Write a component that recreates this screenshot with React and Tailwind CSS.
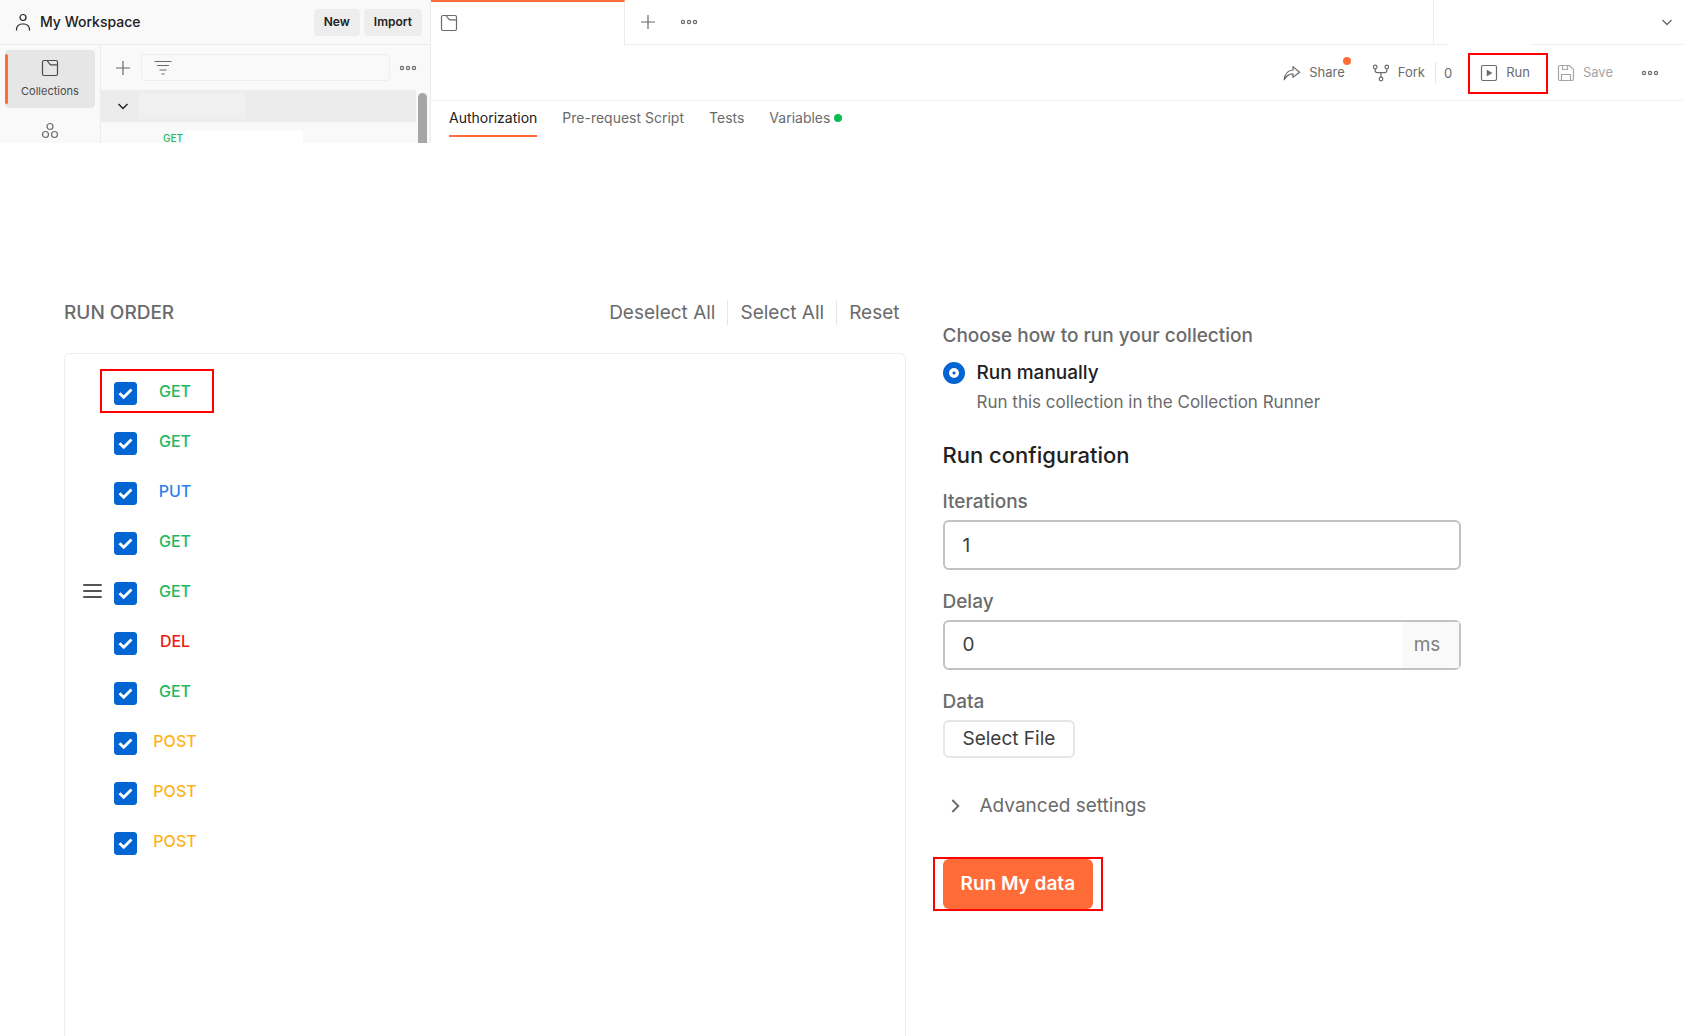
import { useState } from 'react';

const requests = [
  { id: 1, method: 'GET', marked: true },
  { id: 2, method: 'GET' },
  { id: 3, method: 'PUT' },
  { id: 4, method: 'GET' },
  { id: 5, method: 'GET', hovered: true },
  { id: 6, method: 'DEL' },
  { id: 7, method: 'GET' },
  { id: 8, method: 'POST' },
  { id: 9, method: 'POST' },
  { id: 10, method: 'POST' },
];

const methodColors = {
  GET: 'text-[#1fb85c]',
  PUT: 'text-[#2a7ff0]',
  DEL: 'text-[#eb2013]',
  POST: 'text-[#ffb31a]',
};

const tabs = ['Authorization', 'Pre-request Script', 'Tests', 'Variables'];

function Icon({ children, size = 18, className = '' }) {
  return (
    <svg width={size} height={size} viewBox="0 0 18 18" fill="none" stroke="currentColor" strokeWidth="1.2"
      className={`shrink-0 ${className}`} aria-hidden="true">
      {children}
    </svg>
  );
}

const UserIcon = () => (
  <Icon>
    <circle cx="9" cy="4.5" r="3" />
    <path d="M2.5 17.5v-1.2a5.3 5.3 0 0 1 5.3-5.3h2.4a5.3 5.3 0 0 1 5.3 5.3v1.2" />
  </Icon>
);

const CollectionIcon = () => (
  <Icon>
    <rect x="1.5" y="1.5" width="15" height="15" rx="1.5" />
    <path d="M6 1.5l2.8 3.7a1.5 1.5 0 0 0 1.2.6h6.5" />
  </Icon>
);

const ApiIcon = () => (
  <Icon>
    <circle cx="9" cy="4.5" r="3" />
    <circle cx="4.5" cy="12.5" r="3" />
    <circle cx="13.5" cy="12.5" r="3" />
  </Icon>
);

const PlusIcon = () => (
  <Icon>
    <path d="M9 2v14M2 9h14" />
  </Icon>
);

const FilterIcon = () => (
  <Icon>
    <path d="M.5 2.5h17M3 6.5h12M5.5 11h7M7.5 15h3" />
  </Icon>
);

const DotsIcon = () => (
  <Icon>
    <circle cx="3" cy="9" r="1.6" />
    <circle cx="9" cy="9" r="1.6" />
    <circle cx="15" cy="9" r="1.6" />
  </Icon>
);

const ChevronIcon = ({ size, className }) => (
  <Icon size={size} className={className}>
    <path d="M4.5 7L9 11.5 13.5 7" strokeWidth="1.4" />
  </Icon>
);

const ShareIcon = () => (
  <Icon>
    <path d="M1.2 15.8c.4-5.6 3.3-9.3 8.8-9.8V2.6l6.6 5.7-6.6 5V9.800c-4 0-6.800 2-8.800 6z" strokeLinejoin="round" />
  </Icon>
);

const ForkIcon = () => (
  <Icon>
    <circle cx="3.2" cy="3" r="1.8" />
    <circle cx="14.8" cy="3" r="1.8" />
    <circle cx="9" cy="15" r="1.8" />
    <path d="M3.2 4.8v1.7c0 1.3.8 2.1 2.1 2.1h7.4c1.3 0 2.1-.8 2.1-2.1V4.8M9 8.6v4.6" />
  </Icon>
);

const RunIcon = () => (
  <Icon>
    <rect x="1.5" y="1.5" width="15" height="15" rx="1.5" />
    <path d="M7 6l5 3-5 3z" fill="currentColor" strokeWidth="0.5" />
  </Icon>
);

const SaveIcon = () => (
  <Icon>
    <path d="M1.5 3a1.5 1.5 0 0 1 1.5-1.5h9.5l4 4V15a1.5 1.5 0 0 1-1.5 1.5H3A1.5 1.5 0 0 1 1.5 15z" />
    <path d="M5.5 1.5v4h5v-4M4.5 16.5v-6h9v6" />
  </Icon>
);

const CheckIcon = () => (
  <svg viewBox="0 0 23 23" fill="none" stroke="white" strokeWidth="2.8" aria-hidden="true"
    className="pointer-events-none col-start-1 row-start-1 size-[23px]">
    <path d="M5.5 11.2l4.2 4 7.8-7.700" />
  </svg>
);

// Red frame that calls out the control inside its relative parent
function Callout({ className }) {
  return <span className={`pointer-events-none absolute border-2 border-[#ff0000] ${className}`} />;
}

function Sidebar() {
  return (
    <aside className="flex w-[431px] shrink-0 flex-col border-r border-[#ececec] bg-[#f9f9f9]">
      <header className="flex h-[45px] items-center border-b border-[#ececec] pr-2 pl-3.5 text-[#212121]">
        <UserIcon />
        <h1 className="ml-2 flex-1 text-sm font-medium">My Workspace</h1>
        <div className="flex gap-1">
          <button className="h-[27px] rounded bg-[#ededed] px-2.5 text-xs font-semibold">New</button>
          <button className="h-[27px] rounded bg-[#ededed] px-2.5 text-xs font-semibold">Import</button>
        </div>
      </header>
      <div className="flex flex-1">
        <nav className="flex w-[101px] shrink-0 flex-col items-center border-r border-[#ececec] pt-[5px]">
          <button className="relative flex h-[58px] w-[90px] flex-col items-center rounded bg-[#e6e6e6] pt-[9px] text-[#4a4a4a]">
            <span className="absolute inset-y-1 left-0 w-[3px] rounded-full bg-[#ff6c37]" />
            <CollectionIcon />
            <span className="mt-1 text-[11px] leading-5">Collections</span>
          </button>
          <button className="mt-3.5 text-[#6b6b6b]" aria-label="APIs"><ApiIcon /></button>
        </nav>
        <div className="min-w-0 flex-1">
          <div className="flex items-center px-[13px] pt-[9px] text-[#6b6b6b]">
            <button aria-label="Create"><PlusIcon /></button>
            <div className="ml-[9px] flex h-[27px] flex-1 items-center rounded border border-[#ededed] pl-3">
              <FilterIcon />
              <input aria-label="Filter" className="min-w-0 flex-1 bg-transparent px-2 text-xs outline-none" />
            </div>
            <button className="ml-[9px]" aria-label="More"><DotsIcon /></button>
          </div>
          <div className="mt-[9px] flex justify-between">
            <div className="flex-1">
              <div className="flex h-8 items-center bg-[#ececec] pl-[13px] text-[#212121]">
                <ChevronIcon />
                <span className="ml-[7px] h-[26px] w-[106px] bg-[#f0f0f0]" />
              </div>
              <div className="flex h-[21px] items-end pl-[62px]">
                <span className="text-[10px] leading-[10px] font-medium text-[#1fb85c]">GET</span>
                <span className="ml-0.5 h-3 w-[118px] bg-white" />
              </div>
            </div>
            <div className="mt-[3px] mr-[3px] ml-0.5 w-[9px] rounded-t-full bg-[#a6a6a6]" />
          </div>
        </div>
      </div>
    </aside>
  );
}

function Workbench() {
  const [active, setActive] = useState('Authorization');
  return (
    <main className="flex min-w-0 flex-1 flex-col">
      <div className="flex h-[45px] text-[#6b6b6b]">
        <div className="w-[194px] border-t-2 border-r border-t-[#ff6c37] border-r-[#ececec] pt-3 pl-[9px]">
          <CollectionIcon />
        </div>
        <div className="flex flex-1 items-center gap-[23px] border-b border-[#ececec] pl-3.5">
          <button aria-label="New tab"><PlusIcon /></button>
          <button aria-label="Tab options"><DotsIcon /></button>
        </div>
        <div className="relative flex w-[250px] items-center justify-end border-b border-l border-[#ececec] pr-[7px]">
          <button aria-label="Environments"><ChevronIcon /></button>
          <span className="absolute -bottom-px left-3.5 h-px w-[83px] bg-white" />
        </div>
      </div>
      <div className="flex h-14 items-center justify-end border-b border-[#f2f2f2] pr-6 text-[13px] text-[#6b6b6b]">
        <button className="relative flex items-center gap-2">
          <ShareIcon />
          Share
          <span className="absolute -top-1.5 -right-1.5 size-2 rounded-full bg-[#ff6c37]" />
        </button>
        <button className="ml-[27px] flex items-center gap-2">
          <ForkIcon />
          Fork
        </button>
        <span className="ml-2.5 h-[22px] border-l border-[#e6e6e6] pl-2 leading-[22px]">0</span>
        <button className="relative ml-7 flex items-center gap-2">
          <RunIcon />
          Run
          <Callout className="-top-2.5 -right-[18px] -bottom-3 -left-3" />
        </button>
        <button className="ml-[27px] flex items-center gap-2 text-[#a6a6a6]">
          <SaveIcon />
          Save
        </button>
        <button className="ml-7" aria-label="More actions"><DotsIcon /></button>
      </div>
      <div className="flex gap-[25px] pl-[18px] text-sm">
        {tabs.map((tab) => (
          <button key={tab} onClick={() => setActive(tab)}
            className={`flex h-9 items-center gap-1 border-b-2 ${active === tab ? 'border-[#ff6c37] text-[#212121]' : 'border-transparent text-[#6b6b6b]'}`}>
            {tab}
            {tab === 'Variables' && <span className="size-2 rounded-full bg-[#0cbb52]" />}
          </button>
        ))}
      </div>
    </main>
  );
}

function RequestRow({ request, checked, onToggle }) {
  return (
    <li className="relative flex h-[50px] items-center pl-[18px]">
      {request.marked && <Callout className="top-px left-[35px] h-11 w-[114px]" />}
      <span className="flex w-[31px] flex-col gap-1 pb-1">
        {request.hovered && [0, 1, 2].map((n) => <span key={n} className="h-0.5 w-[19px] rounded-full bg-[#555]" />)}
      </span>
      <label className="flex items-center gap-[15px]">
        <span className="grid">
          <input type="checkbox" checked={checked} onChange={onToggle}
            className="col-start-1 row-start-1 size-[23px] appearance-none rounded-[3px] border border-[#0265d2] checked:bg-[#0265d2]" />
          {checked && <CheckIcon />}
        </span>
        <span className={`w-[46px] pb-1 text-center text-base font-medium ${methodColors[request.method]}`}>{request.method}</span>
      </label>
    </li>
  );
}

function RunOrder() {
  const all = requests.map((r) => r.id);
  const [selected, setSelected] = useState(all);
  const toggle = (id) => setSelected(selected.includes(id) ? selected.filter((s) => s !== id) : [...selected, id]);

  return (
    <section className="ml-16 flex w-1/2 flex-col pt-[157px]">
      <div className="flex items-center justify-between pr-1.5 text-[19px] leading-[25px] text-[#6b6b6b]">
        <h2 className="font-medium">RUN ORDER</h2>
        <div className="flex divide-x divide-[#e6e6e6]">
          <button className="pr-3" onClick={() => setSelected([])}>Deselect All</button>
          <button className="px-3" onClick={() => setSelected(all)}>Select All</button>
          <button className="pl-3" onClick={() => setSelected(all)}>Reset</button>
        </div>
      </div>
      <ul className="mt-7 flex-1 rounded-t-md border border-b-0 border-[#ededed] pt-3.5">
        {requests.map((request) => (
          <RequestRow key={request.id} request={request} checked={selected.includes(request.id)}
            onToggle={() => toggle(request.id)} />
        ))}
      </ul>
    </section>
  );
}

function RunSettings() {
  return (
    <form className="ml-[37px] w-[518px] pt-[181px] text-[19px] text-[#6b6b6b]" onSubmit={(e) => e.preventDefault()}>
      <fieldset>
        <legend className="leading-6 font-medium">Choose how to run your collection</legend>
        <div className="mt-[13px] flex items-start gap-3">
          <input id="manual" type="radio" name="mode" defaultChecked
            className="mt-px size-[22px] appearance-none rounded-full border border-[#0265d2] checked:border-[6px] checked:bg-[radial-gradient(#0265d2_1px,white_2px)]" />
          <div>
            <label htmlFor="manual" className="block leading-6 font-medium text-[#212121]">Run manually</label>
            <p className="mt-[5px] text-[17px] leading-6">Run this collection in the Collection Runner</p>
          </div>
        </div>
      </fieldset>

      <h2 className="mt-[25px] text-[22px] leading-8 font-medium text-[#212121]">Run configuration</h2>

      <label htmlFor="iterations" className="mt-[19px] block leading-6 font-medium">Iterations</label>
      <input id="iterations" defaultValue="1"
        className="mt-1.5 h-[50px] w-full rounded-md border-2 border-[#c2c2c2] px-[18px] text-[#3d3d3d] outline-none" />

      <label htmlFor="delay" className="mt-5 block leading-6 font-medium">Delay</label>
      <div className="mt-1.5 flex h-[50px] rounded-md border-2 border-[#c2c2c2]">
        <input id="delay" defaultValue="0" className="min-w-0 flex-1 px-[18px] text-[#3d3d3d] outline-none" />
        <span className="flex w-[57px] items-center justify-center bg-[#f9f9f9] pr-1.5 text-[#808080]">ms</span>
      </div>

      <p className="mt-5 leading-6 font-medium">Data</p>
      <button type="button" className="mt-1.5 h-[38px] rounded-md border-2 border-[#e6e6e6] px-[18px] text-[#3d3d3d]">
        Select File
      </button>

      <button type="button" className="mt-9 flex items-center gap-[13px] leading-6">
        <ChevronIcon size={24} className="-rotate-90" />
        Advanced settings
      </button>

      <div className="relative mt-[41px] inline-block">
        <button type="submit" className="h-[50px] rounded-md bg-[#ff6c37] px-[18px] font-semibold text-white">
          Run My data
        </button>
        <Callout className="-inset-x-2.5 -inset-y-0.5" />
      </div>
    </form>
  );
}

export default function App() {
  return (
    <div className="flex min-h-screen flex-col bg-white font-['Inter',sans-serif]">
      <div className="flex min-h-[143px]">
        <Sidebar />
        <Workbench />
      </div>
      <div className="flex flex-1">
        <RunOrder />
        <RunSettings />
      </div>
    </div>
  );
}
